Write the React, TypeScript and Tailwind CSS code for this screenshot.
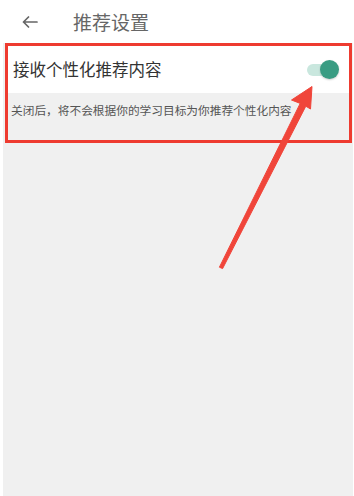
function BackArrow() {
  return (
    <svg width="16" height="12" viewBox="0 0 16 12" fill="none" className="ml-[22px]">
      <path
        d="M15 6H1.5M6.5 1L1.5 6L6.5 11"
        stroke="#666"
        strokeWidth="1.7"
        strokeLinecap="round"
        strokeLinejoin="round"
      />
    </svg>
  );
}

function Toggle() {
  return (
    <div className="relative h-[20px] w-[34px]">
      <div className="absolute left-[2px] top-[4px] h-[12px] w-[24px] rounded-full bg-[#c9e7de]" />
      <div className="absolute right-0 top-0 h-[19px] w-[19px] rounded-full bg-[#3a9c83] shadow-[0_1px_2px_rgba(0,0,0,0.2)]" />
    </div>
  );
}

export default function App() {
  return (
    <div
      className="relative flex h-[496px] w-[354px] flex-col overflow-hidden bg-white"
      style={{ fontFamily: '"Noto Sans CJK SC", "Noto Sans", sans-serif' }}
    >
      <div className="flex h-[43px] shrink-0 items-center">
        <BackArrow />
        <span className="ml-[35px] text-[19px] leading-none text-[#666]">推荐设置</span>
      </div>
      <div className="ml-[3px] mr-[1px] flex-1 bg-[#f0f0f0] pl-[2px] pr-[1px]">
        <div className="border-[3px] border-[#ee3b30]">
          <div className="flex h-[47px] items-center justify-between bg-white pl-[5px] pr-[10px]">
            <span className="text-[16.5px] text-[#333]">接收个性化推荐内容</span>
            <Toggle />
          </div>
          <div className="h-[47px] bg-[#f0f0f0] pl-[3px] pt-[10px] text-[11.7px] leading-[14px] text-[#555]">
            关闭后，将不会根据你的学习目标为你推荐个性化内容
          </div>
        </div>
      </div>
      <svg className="pointer-events-none absolute left-0 top-0" width="354" height="496">
        <polygon
          points="312,86.5 310.5,109 305.8,106.2 222.6,268.6 219.4,267.2 300.2,103.4 291.5,100"
          fill="#f0453a"
          stroke="#f0453a"
          strokeWidth="1"
          strokeLinejoin="round"
        />
      </svg>
    </div>
  );
}
